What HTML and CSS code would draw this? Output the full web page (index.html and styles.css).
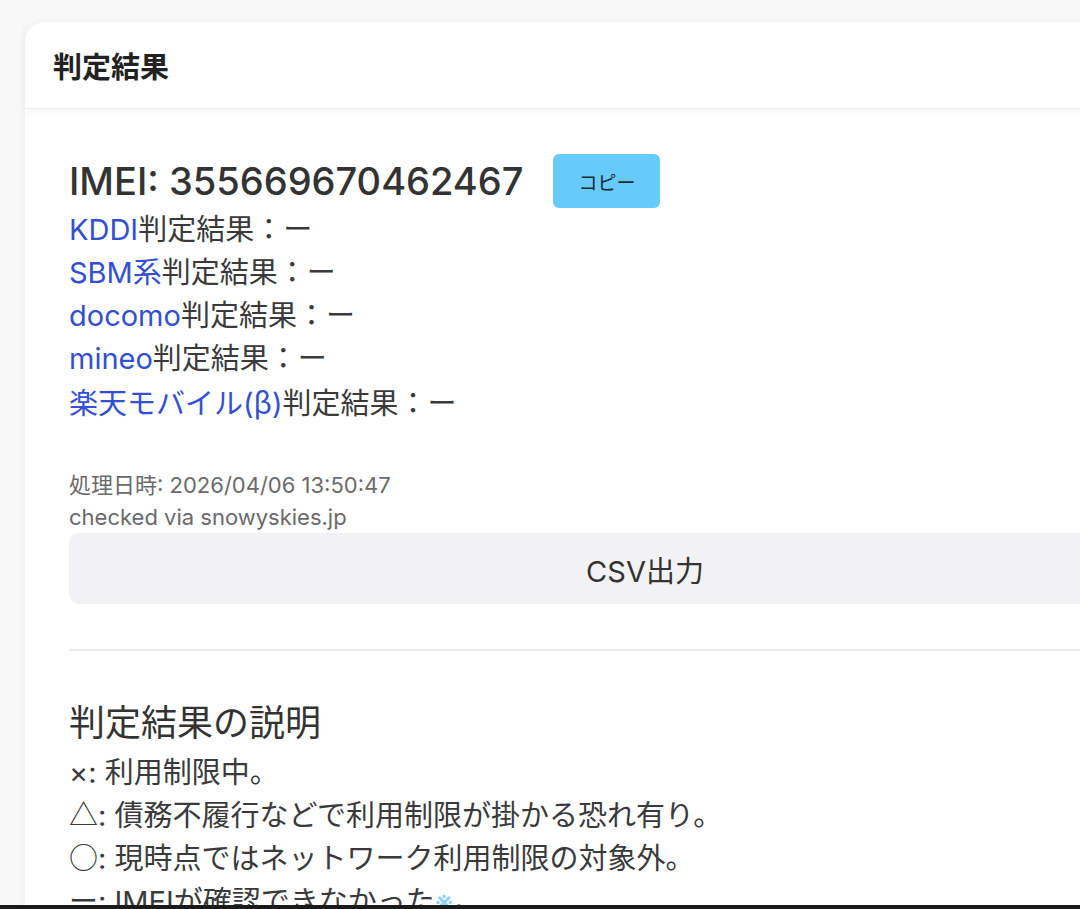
FILE: index.html
```html
<!DOCTYPE html>
<html lang="ja">
<head>
  <meta charset="UTF-8">
  <meta name="viewport" content="width=device-width, initial-scale=1.0">
  <title>判定結果</title>
  <link rel="stylesheet" href="styles.css">
</head>
<body>
  <div class="card">
    <div class="card-header">判定結果</div>
    <div class="card-body">
      <div class="imei-row">
        <h2 class="imei">IMEI: 355669670462467</h2>
        <button class="copy-button">コピー</button>
      </div>
      <ul class="result-list">
        <li><a href="#">KDDI</a>判定結果：ー</li>
        <li><a href="#">SBM系</a>判定結果：ー</li>
        <li><a href="#">docomo</a>判定結果：ー</li>
        <li><a href="#">mineo</a>判定結果：ー</li>
        <li><a href="#">楽天モバイル(<span class="cjk">β</span>)</a>判定結果：ー</li>
      </ul>
      <div class="meta">
        <div>処理日時: 2026/04/06 13:50:47</div>
        <div>checked via snowyskies.jp</div>
      </div>
      <button class="csv-button">CSV出力</button>
      <hr class="divider">
      <h3 class="legend-title">判定結果の説明</h3>
      <ul class="legend-list">
        <li>×: 利用制限中。</li>
        <li><span class="cjk">△</span>: 債務不履行などで利用制限が掛かる恐れ有り。</li>
        <li><span class="cjk">○</span>: 現時点ではネットワーク利用制限の対象外。</li>
        <li><span class="cjk">ー</span>: IMEIが確認できなかった<a href="#" class="note">※</a>。</li>
      </ul>
    </div>
  </div>
  <div class="bottom-bar"></div>
</body>
</html>
```

FILE: styles.css
```css
body {
  margin: 0;
  padding: 0;
  background-color: #f8f8f9;
  color: #3a3a3c;
  font-family: Inter, "Noto Sans CJK JP", sans-serif;
  overflow: hidden;
}
.cjk {
  font-family: "Noto Sans CJK JP", sans-serif;
}
.card {
  width: 1240px;
  margin: 22px 0 0 25px;
  background-color: #fff;
  border-radius: 20px;
  box-shadow: 0 1px 10px rgba(0, 0, 0, 0.06);
}
.card-header {
  height: 86px;
  display: flex;
  align-items: center;
  padding: 0 28px;
  font-size: 29px;
  font-weight: bold;
  color: #222;
  border-bottom: 1px solid #ececec;
  box-shadow: 0 3px 6px rgba(0, 0, 0, 0.04);
}
.card-body {
  padding: 45px 44px 40px;
}
.imei-row {
  display: flex;
  align-items: center;
  gap: 30px;
  height: 54px;
}
.imei {
  margin: 0;
  font-size: 38px;
  font-weight: 500;
  color: #333;
  line-height: 54px;
}
.copy-button {
  height: 54px;
  padding: 0 25px;
  border: none;
  border-radius: 6px;
  background-color: #66cbfb;
  color: #1c2a3a;
  font-family: inherit;
  font-size: 19px;
  cursor: pointer;
}
ul {
  list-style-type: none;
  margin: 0;
  padding: 0;
}
.result-list li {
  font-size: 29px;
  line-height: 43px;
}
a {
  color: #3350d2;
  text-decoration: none;
}
.meta {
  margin-top: 44px;
  font-size: 22px;
  line-height: 32px;
  color: #6a6a6c;
}
.csv-button {
  display: block;
  width: 100%;
  height: 71px;
  border: none;
  border-radius: 10px;
  background-color: #f2f2f4;
  color: #333;
  font-family: inherit;
  font-size: 29px;
  cursor: pointer;
}
.divider {
  margin: 45px 0 0;
  border: none;
  border-top: 2px solid #ededed;
}
.legend-title {
  margin: 47px 0 0;
  font-size: 36px;
  font-weight: normal;
  line-height: 50px;
  color: #333;
}
.legend-list {
  margin-top: 4px;
}
.legend-list li {
  font-size: 29px;
  line-height: 41px;
}
.note {
  color: #8ed3f5;
}
.bottom-bar {
  position: fixed;
  left: 0;
  right: 0;
  bottom: 0;
  height: 4px;
  background-color: #1a1a1a;
}
```
